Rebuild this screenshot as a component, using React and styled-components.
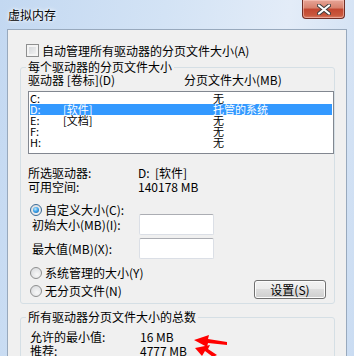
import styled, { createGlobalStyle } from "styled-components";

const GlobalStyle = createGlobalStyle`
  html, body {
    margin: 0;
    padding: 0;
    background: #bcd3ee;
  }
  body {
    font-family: "Noto Sans CJK SC", "Noto Sans", sans-serif;
    font-size: 12px;
    color: #000;
  }
  * { box-sizing: border-box; }
`;

const Window = styled.div`
  position: relative;
  width: 354px;
  height: 356px;
  overflow: hidden;
  display: flex;
  flex-direction: column;
  background: linear-gradient(100deg, #c3d8f1 0%, #d3e3f5 40%, #e3ecf8 70%, #cadcf2 100%);
`;

const TitleBar = styled.div`
  height: 29px;
  flex-shrink: 0;
  display: flex;
  justify-content: space-between;
  align-items: flex-start;
`;

const Title = styled.div`
  padding-left: 8px;
  line-height: 30px;
  font-size: 12px;
  text-shadow: 0 0 5px #fff, 0 0 3px #fff;
`;

const CloseButton = styled.div`
  width: 43px;
  height: 19px;
  margin-right: 9px;
  display: flex;
  align-items: center;
  justify-content: center;
  border: 1px solid #6f2e26;
  border-top: none;
  border-radius: 0 0 4px 4px;
  background: linear-gradient(#e7a597 0%, #d7806c 45%, #c24630 50%, #c9583d 85%, #d9806a 100%);
  box-shadow: inset 0 0 0 1px rgba(255, 210, 200, 0.5);
`;

const Frame = styled.div`
  flex: 1;
  min-height: 0;
  display: flex;
  padding: 0 7px;
`;

const Client = styled.div`
  flex: 1;
  display: flex;
  flex-direction: column;
  background: #f0f0f0;
  border: 1px solid #98a9bd;
  border-bottom: none;
`;

const CheckRow = styled.div`
  display: flex;
  align-items: center;
  gap: 3px;
  height: 13px;
  margin: 14px 0 0 18px;
  line-height: 13px;
`;

const Checkbox = styled.span`
  width: 13px;
  height: 13px;
  flex-shrink: 0;
  border: 1px solid #8e8f8f;
  background: linear-gradient(135deg, #cfd2d6, #f7f7f7);
  box-shadow: inset 0 0 0 2px #f4f4f4;
`;

const Group = styled.fieldset`
  margin: ${(p) => p.$top}px 11px 0 12px;
  padding: 0 0 ${(p) => p.$bottom}px 7px;
  border: 1px solid #d5dfe5;
  border-radius: 3px;
  min-width: 0;
`;

const Legend = styled.legend`
  padding: 0 2px;
  margin-left: -2px;
  height: 14px;
  line-height: 14px;
`;

const HeaderRow = styled.div`
  display: grid;
  grid-template-columns: 156px 1fr;
  height: 12px;
  line-height: 12px;
`;

const ListBox = styled.div`
  margin-top: 5px;
  border: 1px solid #828790;
  background: #fff;
  padding: 1px 1px 5px 1px;
`;

const ListRow = styled.div`
  display: grid;
  grid-template-columns: 33px 150px 1fr;
  height: 11px;
  line-height: 11px;
  font-size: 11px;
  background: ${(p) => (p.$selected ? "#3399ff" : "transparent")};
  color: ${(p) => (p.$selected ? "#fff" : "#000")};
  white-space: nowrap;
`;

const InfoGrid = styled.div`
  display: grid;
  grid-template-columns: ${(p) => p.$label}px 1fr;
  grid-auto-rows: 14px;
  line-height: 14px;
  margin-top: ${(p) => p.$top}px;
  padding-left: ${(p) => p.$indent || 0}px;
  white-space: nowrap;
`;

const RadioRow = styled.div`
  display: flex;
  align-items: center;
  gap: 3px;
  height: ${(p) => p.$h}px;
  line-height: 12px;
  margin-top: ${(p) => p.$top}px;
  padding-left: 2px;
`;

const Radio = styled.span`
  position: relative;
  width: 12px;
  height: 12px;
  flex-shrink: 0;
  border-radius: 50%;
  border: 1px solid ${(p) => (p.$on ? "#3a6a95" : "#8e8f8f")};
  background: radial-gradient(circle at 60% 65%, #f8f8f8, #d4d6d9);
  &::after {
    content: "";
    display: ${(p) => (p.$on ? "block" : "none")};
    position: absolute;
    left: 2px;
    top: 2px;
    width: 6px;
    height: 6px;
    border-radius: 50%;
    background: radial-gradient(circle at 40% 35%, #c4ecff 0%, #3fa4ea 45%, #0c5aa6 100%);
  }
`;

const InputRow = styled.div`
  display: grid;
  grid-template-columns: 111px 75px;
  align-items: center;
  height: 21px;
  margin-top: ${(p) => p.$top}px;
  & > span {
    padding-left: 4px;
  }
`;

const TextInput = styled.div`
  width: 75px;
  height: 21px;
  background: #fff;
  border: 1px solid #dbdfe6;
  border-top-color: #abadb3;
  border-radius: 2px;
`;

const LastRow = styled.div`
  display: flex;
  justify-content: space-between;
  align-items: flex-start;
  height: 19px;
  margin-top: 1px;
`;

const Button = styled.div`
  width: 72px;
  height: 19px;
  margin-right: 8px;
  display: flex;
  align-items: center;
  justify-content: center;
  border: 1px solid #707070;
  border-radius: 3px;
  background: linear-gradient(#f2f2f2 0%, #ebebeb 50%, #dddddd 50%, #cfcfcf 100%);
  box-shadow: inset 0 0 0 1px #fcfcfc;
  line-height: 12px;
`;

const Arrows = styled.svg`
  position: absolute;
  left: 188px;
  top: 330px;
`;

const drives = [
  { letter: "C:", label: "", size: "无" },
  { letter: "D:", label: "[软件]", size: "托管的系统", selected: true },
  { letter: "E:", label: "[文档]", size: "无" },
  { letter: "F:", label: "", size: "无" },
  { letter: "H:", label: "", size: "无" },
];

export default function App() {
  return (
    <>
      <GlobalStyle />
      <Window>
        <TitleBar>
          <Title>虚拟内存</Title>
          <CloseButton>
            <svg width="14" height="11" viewBox="0 0 14 11">
              <path d="M2 1.5 L12 9.5 M12 1.5 L2 9.5" stroke="#3c3c3c" strokeWidth="4" strokeLinecap="round" />
              <path d="M2 1.5 L12 9.5 M12 1.5 L2 9.5" stroke="#fff" strokeWidth="2.2" strokeLinecap="round" />
            </svg>
          </CloseButton>
        </TitleBar>
        <Frame>
          <Client>
            <CheckRow>
              <Checkbox />
              <span>自动管理所有驱动器的分页文件大小(A)</span>
            </CheckRow>

            <Group $top={3} $bottom={4}>
              <Legend>每个驱动器的分页文件大小</Legend>
              <HeaderRow>
                <span>驱动器 [卷标](D)</span>
                <span>分页文件大小(MB)</span>
              </HeaderRow>
              <ListBox>
                {drives.map((d) => (
                  <ListRow key={d.letter} $selected={d.selected}>
                    <span>{d.letter}</span>
                    <span>{d.label}</span>
                    <span>{d.size}</span>
                  </ListRow>
                ))}
              </ListBox>
              <InfoGrid $label={110} $top={12}>
                <span>所选驱动器:</span>
                <span>D:&nbsp;&nbsp;[软件]</span>
                <span>可用空间:</span>
                <span>140178 MB</span>
              </InfoGrid>
              <RadioRow $top={11} $h={9}>
                <Radio $on />
                <span>自定义大小(C):</span>
              </RadioRow>
              <InputRow $top={0}>
                <span>初始大小(MB)(I):</span>
                <TextInput />
              </InputRow>
              <InputRow $top={3}>
                <span>最大值(MB)(X):</span>
                <TextInput />
              </InputRow>
              <RadioRow $top={8} $h={12}>
                <Radio />
                <span>系统管理的大小(Y)</span>
              </RadioRow>
              <LastRow>
                <RadioRow $top={5} $h={12}>
                  <Radio />
                  <span>无分页文件(N)</span>
                </RadioRow>
                <Button>设置(S)</Button>
              </LastRow>
            </Group>

            <Group $top={6} $bottom={20}>
              <Legend>所有驱动器分页文件大小的总数</Legend>
              <InfoGrid $label={110} $top={6} $indent={2}>
                <span>允许的最小值:</span>
                <span>16 MB</span>
                <span>推荐:</span>
                <span>4777 MB</span>
              </InfoGrid>
            </Group>
          </Client>
        </Frame>
        <Arrows width="50" height="26" viewBox="0 0 50 26">
          <polygon points="6,10 21,5 20,9 39,12 39,15 20,13 19,17" fill="#ff0000" />
          <polygon points="7,18 22,15 20,19 29,25 25,27 17,21 14,26" fill="#ff0000" />
        </Arrows>
      </Window>
    </>
  );
}
